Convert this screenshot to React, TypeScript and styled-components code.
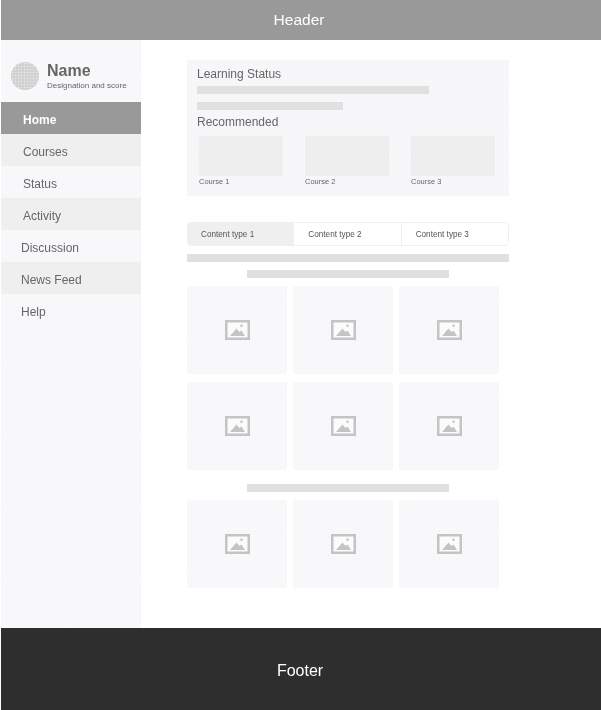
import React from "react";
import styled, { createGlobalStyle } from "styled-components";

const GlobalStyle = createGlobalStyle`
  html, body { margin: 0; padding: 0; background: #fff; }
  body { font-family: "Liberation Sans", Arial, sans-serif; }
`;

const dots = `
  background-color: #f8f8fa;
  background-image:
    radial-gradient(circle at center, #eeeef1 0.5px, transparent 0.9px),
    radial-gradient(circle at center, #eeeef1 0.5px, transparent 0.9px);
  background-size: 9px 9px;
  background-position: 0 0, 4px 5px;
`;

const Page = styled.div`
  width: 600px;
  height: 710px;
  margin-left: 1px;
  display: flex;
  flex-direction: column;
  overflow: hidden;
  will-change: transform;
`;

const Header = styled.header`
  height: 40px;
  flex: none;
  background: #999;
  color: #fff;
  font-size: 15.5px;
  display: flex;
  align-items: center;
  justify-content: center;
  padding-right: 4px;
`;

const Body = styled.div`
  flex: 1;
  display: flex;
  min-height: 0;
`;

const Sidebar = styled.aside`
  ${dots}
  width: 140px;
  flex: none;
`;

const Profile = styled.div`
  height: 62px;
  display: flex;
  align-items: center;
  gap: 8px;
  padding-left: 10px;
  padding-top: 10px;
  box-sizing: border-box;
`;

const Avatar = styled.div`
  width: 28px;
  height: 28px;
  border-radius: 50%;
  background-color: #d6d6d6;
  background-image:
    radial-gradient(circle at center, #e8e8e8 0.5px, transparent 0.8px),
    radial-gradient(circle at center, #bcbcbc 0.5px, transparent 0.8px);
  background-size: 3px 3px;
  background-position: 0 0, 1.5px 1.5px;
`;

const ProfileName = styled.div`
  font-size: 16px;
  line-height: 18px;
  font-weight: 700;
  color: #666;
`;

const ProfileRole = styled.div`
  font-size: 8px;
  line-height: 10px;
  padding-top: 1px;
  color: #666;
`;

const NavItem = styled.div<{ $active?: boolean; $shaded?: boolean; $inset: number }>`
  height: 32px;
  box-sizing: border-box;
  padding-top: 4px;
  display: flex;
  align-items: center;
  padding-left: ${(p) => p.$inset}px;
  font-size: 12px;
  font-weight: ${(p) => (p.$active ? 700 : 400)};
  color: ${(p) => (p.$active ? "#fff" : "#666")};
  background: ${(p) => (p.$active ? "#999" : p.$shaded ? "#efefef" : "transparent")};
`;

const Main = styled.main`
  flex: 1;
  padding: 20px 0 0 46px;
`;

const Column = styled.div`
  width: 322px;
`;

const StatusPanel = styled.section`
  background-color: #f7f7f9;
  background-image: radial-gradient(circle at center, #f3f3f5 0.5px, transparent 0.9px);
  background-size: 3px 3px;
  height: 136px;
  box-sizing: border-box;
  padding: 7px 10px 0;
`;

const PanelTitle = styled.div<{ $top?: number }>`
  font-size: 12px;
  line-height: 14px;
  margin-top: ${(p) => p.$top ?? 0}px;
  color: #666;
`;

const Bar = styled.div<{ $width: number; $top: number; $left?: number }>`
  height: 8px;
  width: ${(p) => p.$width}px;
  margin-top: ${(p) => p.$top}px;
  margin-left: ${(p) => p.$left ?? 0}px;
  background: #e0e0e0;
`;

const CourseRow = styled.div`
  display: flex;
  gap: 22px;
  margin: 7px 0 0 2px;
`;

const Course = styled.div`
  width: 84px;
`;

const CourseThumb = styled.div`
  height: 40px;
  background: #eee;
`;

const CourseLabel = styled.div`
  font-size: 7.5px;
  line-height: 10px;
  padding-top: 1px;
  color: #666;
`;

const Tabs = styled.div`
  margin-top: 26px;
  height: 24px;
  display: flex;
  box-sizing: border-box;
  border: 1px solid #efefef;
  border-radius: 4px;
  overflow: hidden;
`;

const Tab = styled.div<{ $active?: boolean }>`
  flex: 1 1 0;
  box-sizing: border-box;
  display: flex;
  align-items: center;
  padding-left: ${(p) => (p.$active ? 13 : 14)}px;
  font-size: 8.2px;
  color: #555;
  background: ${(p) => (p.$active ? "#efefef" : "#fff")};
  & + & {
    border-left: 1px solid #efefef;
  }
`;

const ImageGrid = styled.div<{ $top: number }>`
  display: grid;
  grid-template-columns: repeat(3, 100px);
  grid-auto-rows: 88px;
  column-gap: 6px;
  row-gap: 8px;
  margin-top: ${(p) => p.$top}px;
`;

const ImageTile = styled.div`
  ${dots}
  border-radius: 2px;
  display: flex;
  align-items: center;
  justify-content: center;
`;

const Footer = styled.footer`
  height: 82px;
  flex: none;
  box-sizing: border-box;
  padding: 3px 2px 0 0;
  background: #2e2e2e;
  color: #fff;
  font-size: 16px;
  display: flex;
  align-items: center;
  justify-content: center;
`;

const ImageIcon = () => (
  <svg width="25" height="20" viewBox="0 0 25 20" aria-hidden="true">
    <rect x="1.25" y="1.25" width="22.5" height="17.5" fill="#fbfbfc" stroke="#c4c4c4" strokeWidth="2.5" />
    <path d="M5 16 L11.5 8.5 L14.5 12 L16.5 10.5 L20 16 Z" fill="#c4c4c4" />
    <circle cx="16.5" cy="5.8" r="1.3" fill="#c4c4c4" />
  </svg>
);

const navItems = [
  { label: "Home", inset: 22, active: true },
  { label: "Courses", inset: 22, shaded: true },
  { label: "Status", inset: 22 },
  { label: "Activity", inset: 22, shaded: true },
  { label: "Discussion", inset: 20 },
  { label: "News Feed", inset: 20, shaded: true },
  { label: "Help", inset: 20 },
];

const courses = ["Course 1", "Course 2", "Course 3"];
const tabs = ["Content type 1", "Content type 2", "Content type 3"];

const Tiles = ({ count }: { count: number }) => (
  <>
    {Array.from({ length: count }, (_, i) => (
      <ImageTile key={i}>
        <ImageIcon />
      </ImageTile>
    ))}
  </>
);

const App = () => {
  return (
    <Page>
      <GlobalStyle />
      <Header>Header</Header>
      <Body>
        <Sidebar>
          <Profile>
            <Avatar />
            <div>
              <ProfileName>Name</ProfileName>
              <ProfileRole>Designation and score</ProfileRole>
            </div>
          </Profile>
          {navItems.map((item) => (
            <NavItem key={item.label} $active={item.active} $shaded={item.shaded} $inset={item.inset}>
              {item.label}
            </NavItem>
          ))}
        </Sidebar>
        <Main>
          <Column>
            <StatusPanel>
              <PanelTitle>Learning Status</PanelTitle>
              <Bar $width={232} $top={5} />
              <Bar $width={146} $top={8} />
              <PanelTitle $top={5}>Recommended</PanelTitle>
              <CourseRow>
                {courses.map((course) => (
                  <Course key={course}>
                    <CourseThumb />
                    <CourseLabel>{course}</CourseLabel>
                  </Course>
                ))}
              </CourseRow>
            </StatusPanel>
            <Tabs>
              {tabs.map((tab, i) => (
                <Tab key={tab} $active={i === 0}>
                  {tab}
                </Tab>
              ))}
            </Tabs>
            <Bar $width={322} $top={8} />
            <Bar $width={202} $top={8} $left={60} />
            <ImageGrid $top={8}>
              <Tiles count={6} />
            </ImageGrid>
            <Bar $width={202} $top={14} $left={60} />
            <ImageGrid $top={8}>
              <Tiles count={3} />
            </ImageGrid>
          </Column>
        </Main>
      </Body>
      <Footer>Footer</Footer>
    </Page>
  );
};

export default App;
